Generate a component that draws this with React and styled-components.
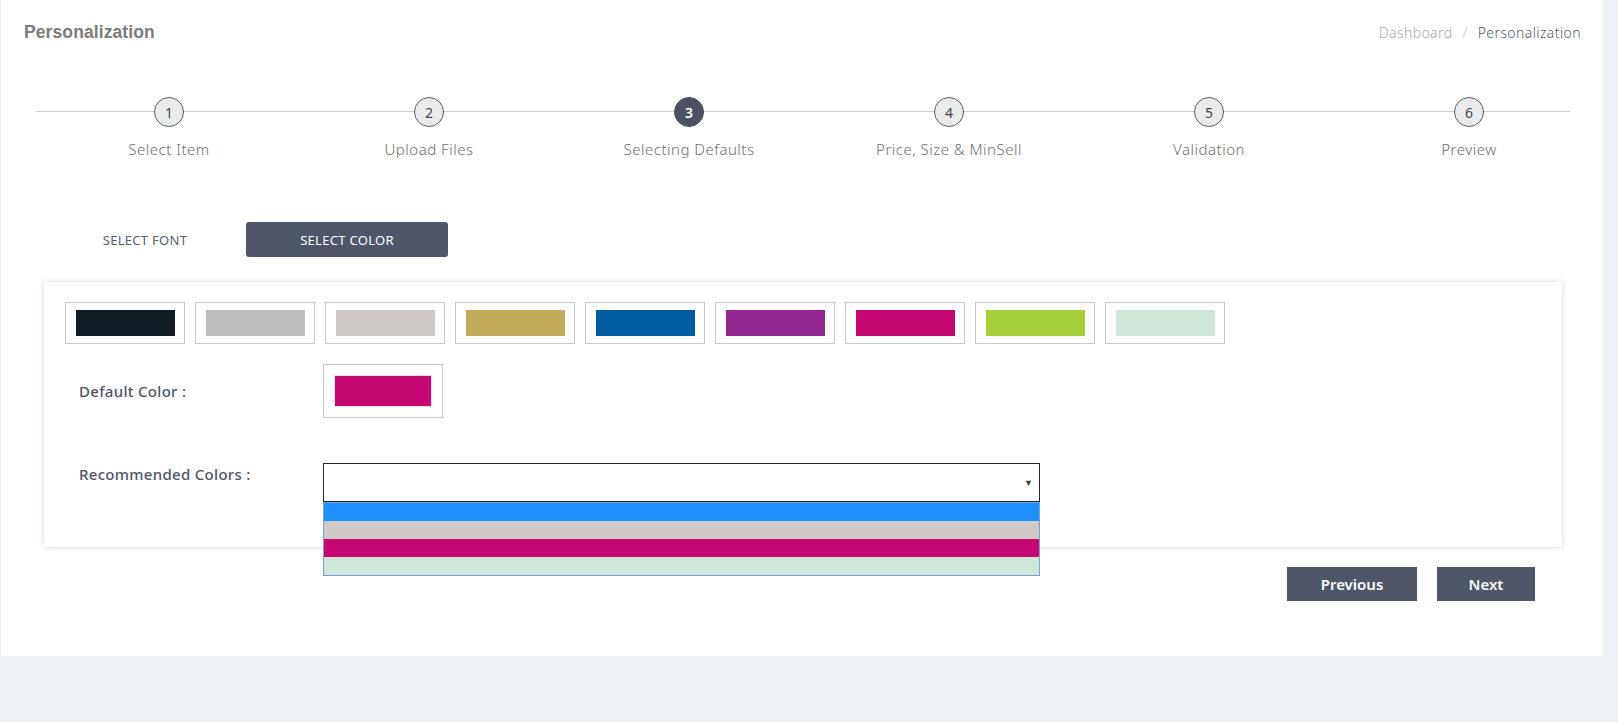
import React from "react";
import styled, { createGlobalStyle } from "styled-components";

const GlobalStyle = createGlobalStyle`
  html, body { margin: 0; padding: 0; }
  body {
    background: #edf0f5;
    font-family: "Noto Sans", "Open Sans", sans-serif;
  }
  * { box-sizing: border-box; }
`;

const Panel = styled.div`
  margin-left: 1px;
  width: 1602px;
  min-height: 656px;
  background: #ffffff;
  display: flex;
  flex-direction: column;
`;

const Header = styled.header`
  height: 65px;
  display: flex;
  align-items: center;
  justify-content: space-between;
  padding: 0 22px 0 23px;
`;

const Title = styled.h1`
  margin: 0;
  font-family: "Liberation Sans", Arial, sans-serif;
  font-weight: 700;
  font-size: 17.5px;
  letter-spacing: 0.1px;
  color: #7b7b7b;
`;

const Crumbs = styled.nav`
  display: flex;
  align-items: center;
  gap: 10px;
  font-size: 14px;
  font-weight: 300;
  letter-spacing: 0.4px;
`;

const Crumb = styled.span`
  color: ${(p) => (p.$active ? "#555a66" : "#a9a9a9")};
`;

const Sep = styled.span`
  color: #c4c4c4;
`;

const Stepper = styled.div`
  position: relative;
  margin-top: 32px;
  padding-left: 38px;
  display: grid;
  grid-template-columns: repeat(6, 260px);
  &::before {
    content: "";
    position: absolute;
    left: 35px;
    width: 1534px;
    top: 14px;
    height: 1px;
    background: #cfcfcf;
  }
`;

const Step = styled.div`
  position: relative;
  display: flex;
  flex-direction: column;
  align-items: center;
  gap: 12px;
`;

const Circle = styled.div`
  width: 30px;
  height: 30px;
  border-radius: 50%;
  display: flex;
  align-items: center;
  justify-content: center;
  font-size: 14px;
  font-weight: ${(p) => (p.$active ? 600 : 400)};
  color: ${(p) => (p.$active ? "#ffffff" : "#444")};
  background: ${(p) => (p.$active ? "#4b5263" : "#e9ecef")};
  border: 1px solid ${(p) => (p.$active ? "#4b5263" : "#5d5d5d")};
`;

const StepLabel = styled.div`
  font-size: 15px;
  line-height: 21px;
  letter-spacing: 0.5px;
  color: #6f6f6f;
  font-weight: 300;
`;

const Tabs = styled.div`
  margin: 62px 0 0 43px;
  display: flex;
`;

const Tab = styled.button`
  width: 202px;
  height: 35px;
  border: none;
  border-radius: 3px;
  font-family: "Noto Sans", sans-serif;
  font-size: 13px;
  letter-spacing: 0.3px;
  text-transform: uppercase;
  cursor: pointer;
  background: ${(p) => (p.$active ? "#50566a" : "transparent")};
  color: ${(p) => (p.$active ? "#ffffff" : "#59606e")};
`;

const Card = styled.section`
  margin: 25px 41px 0 43px;
  padding: 20px 21px 45px;
  background: #fff;
  box-shadow: 0 0 6px rgba(0, 0, 0, 0.16);
  display: flex;
  flex-direction: column;
`;

const Swatches = styled.div`
  display: flex;
  gap: 10px;
`;

const SwatchFrame = styled.div`
  width: 120px;
  height: 42px;
  padding: 7px 9px 7px 10px;
  border: 1px solid #c9c9c9;
`;

const Chip = styled.div`
  width: 100%;
  height: 100%;
  background: ${(p) => p.$color};
`;

const Row = styled.div`
  display: grid;
  grid-template-columns: 258px 1fr;
  align-items: ${(p) => (p.$top ? "start" : "center")};
  margin-top: ${(p) => p.$mt}px;
`;

const Label = styled.div`
  padding-left: 14px;
  font-size: 15px;
  line-height: 22px;
  font-weight: 500;
  letter-spacing: 0.3px;
  color: #4e5466;
`;

const DefaultFrame = styled.div`
  width: 120px;
  height: 54px;
  padding: 10px;
  border: 1px solid #c9c9c9;
`;

const DefaultChip = styled.div`
  width: 98px;
  height: 32px;
  background: #c60873;
  border: 1px solid #e2e2ea;
`;

const SelectWrap = styled.div`
  position: relative;
  width: 717px;
`;

const SelectBox = styled.div`
  height: 39px;
  border: 1px solid #262626;
  background: #fff;
  display: flex;
  align-items: center;
  justify-content: flex-end;
  padding-right: 6px;
  font-size: 9px;
  color: #444;
`;

const OptionList = styled.div`
  position: absolute;
  top: 100%;
  left: 0;
  width: 100%;
  border: 1px solid #7b9fd6;
  background: #fff;
  z-index: 2;
`;

const Option = styled.div`
  height: 18px;
  background: ${(p) => p.$color};
`;

const Actions = styled.div`
  display: flex;
  justify-content: flex-end;
  gap: 20px;
  margin-top: 20px;
  padding-right: 68px;
`;

const NavButton = styled.button`
  height: 34px;
  width: ${(p) => p.$w}px;
  border: none;
  background: #4e5668;
  color: #fff;
  font-family: "Noto Sans", sans-serif;
  font-weight: 600;
  font-size: 15px;
  cursor: pointer;
`;

const steps = [
  "Select Item",
  "Upload Files",
  "Selecting Defaults",
  "Price, Size & MinSell",
  "Validation",
  "Preview",
];

const colors = [
  "#0f1c24",
  "#bdbec0",
  "#cfcac7",
  "#c3ab5b",
  "#005c9f",
  "#92278f",
  "#c60873",
  "#a6ce39",
  "#cde8d8",
];

const recommended = ["#1e90ff", "#cfcac7", "#c60873", "#cde8d8"];

export default function App() {
  return (
    <>
      <GlobalStyle />
      <Panel>
        <Header>
          <Title>Personalization</Title>
          <Crumbs>
            <Crumb>Dashboard</Crumb>
            <Sep>/</Sep>
            <Crumb $active>Personalization</Crumb>
          </Crumbs>
        </Header>

        <Stepper>
          {steps.map((s, i) => (
            <Step key={s}>
              <Circle $active={i === 2}>{i + 1}</Circle>
              <StepLabel>{s}</StepLabel>
            </Step>
          ))}
        </Stepper>

        <Tabs>
          <Tab>Select Font</Tab>
          <Tab $active>Select Color</Tab>
        </Tabs>

        <Card>
          <Swatches>
            {colors.map((c) => (
              <SwatchFrame key={c}>
                <Chip $color={c} />
              </SwatchFrame>
            ))}
          </Swatches>

          <Row $mt={20}>
            <Label>Default Color :</Label>
            <DefaultFrame>
              <DefaultChip />
            </DefaultFrame>
          </Row>

          <Row $mt={45} $top>
            <Label>Recommended Colors :</Label>
            <SelectWrap>
              <SelectBox>▼</SelectBox>
              <OptionList>
                {recommended.map((c) => (
                  <Option key={c} $color={c} />
                ))}
              </OptionList>
            </SelectWrap>
          </Row>
        </Card>

        <Actions>
          <NavButton $w={130}>Previous</NavButton>
          <NavButton $w={98}>Next</NavButton>
        </Actions>
      </Panel>
    </>
  );
}
